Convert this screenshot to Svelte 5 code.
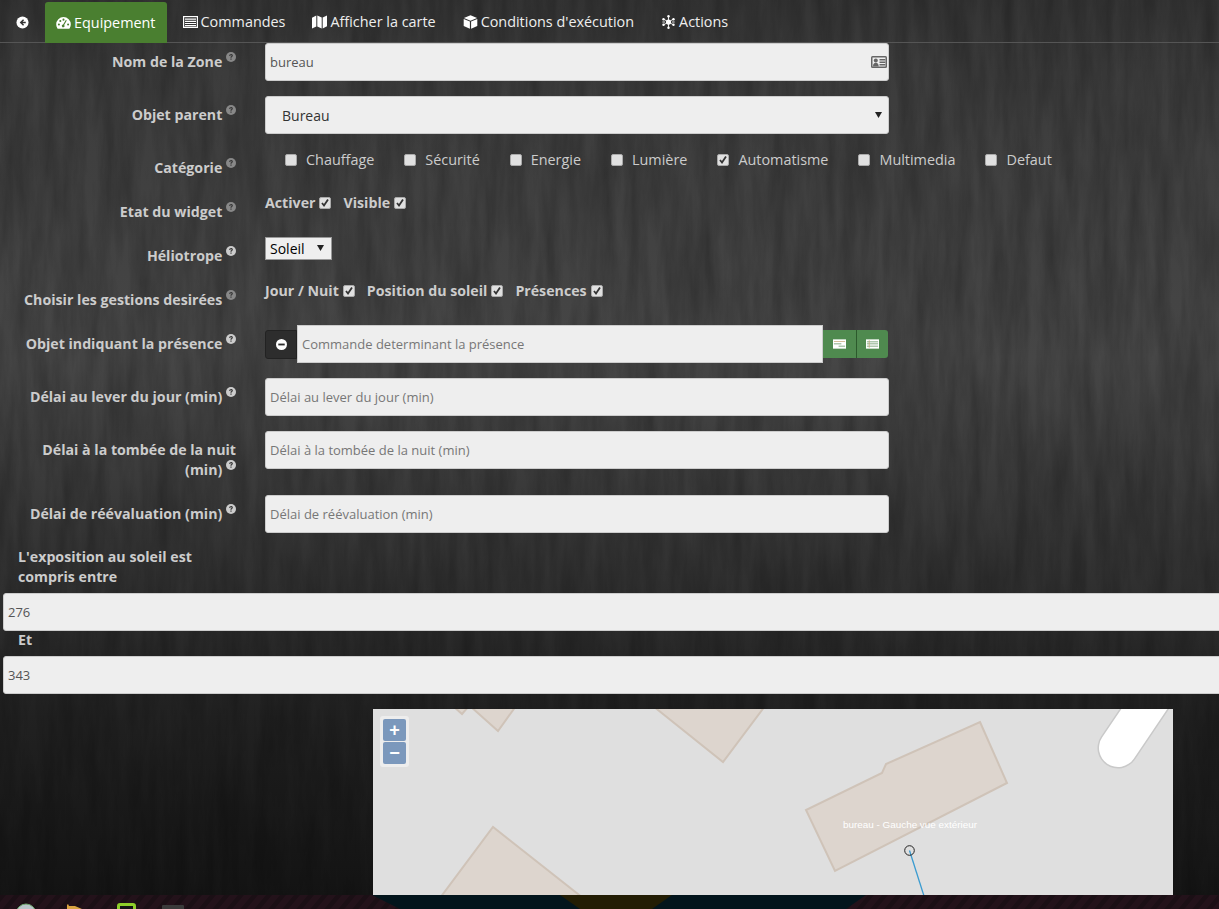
<script>
  const categories = [
    { name: "Chauffage", checked: false },
    { name: "Sécurité", checked: false },
    { name: "Energie", checked: false },
    { name: "Lumière", checked: false },
    { name: "Automatisme", checked: true },
    { name: "Multimedia", checked: false },
    { name: "Defaut", checked: false },
  ];
  const widgetState = ["Activer", "Visible"];
  const managements = ["Jour / Nuit", "Position du soleil", "Présences"];
</script>

{#snippet help(bright = false)}
  <svg class="help" class:bright viewBox="0 0 10 10" aria-hidden="true">
    <circle cx="5" cy="5" r="5" fill="currentColor" />
    <path d="M3.2 3.9c0-1.2.8-1.9 1.9-1.9s1.8.7 1.8 1.6c0 1.2-1.3 1.3-1.3 2.2H4.4c0-1.4 1.2-1.5 1.2-2.2 0-.3-.2-.5-.6-.5s-.6.3-.6.8zM4.4 6.5h1.2v1.3H4.4z" fill="#3a3a3a" />
  </svg>
{/snippet}

<div class="page">
  <svg class="wood" width="1219" height="895" aria-hidden="true">
    <defs>
      <filter id="grain" x="0" y="0" width="100%" height="100%">
        <feTurbulence type="fractalNoise" baseFrequency="0.07 0.009" numOctaves="5" seed="11" />
        <feColorMatrix values="0 0 0 0 0  0 0 0 0 0  0 0 0 0 0  1.3 0 0 0 -0.35" />
      </filter>
      <linearGradient id="shade" x1="0" y1="0" x2="0" y2="1">
        <stop offset="0" stop-color="#343434" />
        <stop offset="0.08" stop-color="#3c3c3c" />
        <stop offset="0.4" stop-color="#464646" />
        <stop offset="0.6" stop-color="#353535" />
        <stop offset="0.8" stop-color="#212121" />
        <stop offset="1" stop-color="#151515" />
      </linearGradient>
    </defs>
    <rect width="1219" height="895" fill="url(#shade)" />
    <rect width="1219" height="895" filter="url(#grain)" opacity="0.28" />
  </svg>

  <nav>
    <a class="tab" href="#back">
      <svg class="ico back" viewBox="0 0 14 14"><circle cx="7" cy="7" r="6.500" fill="#fff" /><path d="M7.600 3.400 4 7l3.600 3.600 1.100-1.100-1.600-1.600h3.400V6.100H7.100l1.600-1.600z" fill="#333" /></svg>
    </a>
    <a class="tab active" href="#equipement">
      <svg class="ico" viewBox="0 0 16 14"><path d="M8 .6a7.800 7.800 0 0 0-7.800 7.800c0 1.600.4 3 1.200 4.300.1.200.3.300.5.300h12.200c.2 0 .4-.1.500-.3.8-1.300 1.200-2.700 1.200-4.300A7.800 7.800 0 0 0 8 .6z" fill="#fff" /><circle cx="3.100" cy="8.600" r="1.100" fill="#4a7f30" /><circle cx="4.600" cy="4.800" r="1.100" fill="#4a7f30" /><circle cx="8" cy="3.400" r="1.100" fill="#4a7f30" /><circle cx="12.900" cy="8.600" r="1.100" fill="#4a7f30" /><path d="M11.500 4.300 8.700 9a1.500 1.500 0 1 1-1.100-.4l2.900-4.800z" fill="#4a7f30" /></svg>
      Equipement
    </a>
    <a class="tab" href="#commandes">
      <svg class="ico" viewBox="0 0 15 13"><rect x=".6" y="1.100" width="13.800" height="10.800" fill="none" stroke="#fff" stroke-width="1.200" /><path d="M2 3h11v1.200H2zM2 5.200h11v1.200H2zM2 7.400h11v1.200H2zM2 9.500h11v1.200H2z" fill="#fff" /></svg>
      Commandes
    </a>
    <a class="tab" href="#carte">
      <svg class="ico" viewBox="0 0 15 14"><path d="M0 2.800 4.300 .6v10.800L0 13.600zM5.300 .6l4.400 2v10.800l-4.400-2zM10.700 2.600 15 .4v10.800l-4.300 2.200z" fill="#fff" /></svg>
      Afficher la carte
    </a>
    <a class="tab" href="#conditions">
      <svg class="ico" viewBox="0 0 14 14"><path d="M7 .3 13.600 3 7 5.700.4 3z" fill="#fff" /><path d="M.2 4 6.400 6.600v7.200L.2 11.100zM7.600 6.600 13.800 4v7.100l-6.200 2.700z" fill="#fff" /></svg>
      Conditions d'exécution
    </a>
    <a class="tab" href="#actions">
      <svg class="ico" viewBox="0 0 16 16">
        <g stroke="#fff" stroke-width="1"><path d="M8 1v14M2 4.500l12 7M14 4.500l-12 7M1 8h3M12 8h3" /></g>
        <circle cx="8" cy="8" r="3" fill="#fff" />
        <g fill="#fff"><circle cx="8" cy="1.500" r="1.400" /><circle cx="8" cy="14.500" r="1.400" /><circle cx="2.300" cy="4.800" r="1.400" /><circle cx="13.700" cy="4.800" r="1.400" /><circle cx="2.300" cy="11.200" r="1.400" /><circle cx="13.700" cy="11.200" r="1.400" /></g>
      </svg>
      Actions
    </a>
  </nav>

  <form>
    <div class="row">
      <label for="zone">Nom de la Zone {@render help()}</label>
      <div class="with-icon">
        <input id="zone" type="text" value="bureau" />
        <svg class="vcard" viewBox="0 0 16 12"><rect width="16" height="12" rx="1.500" fill="#666" /><rect x="1.500" y="1.500" width="13" height="9" fill="#eee" /><circle cx="4.800" cy="4.600" r="2" fill="#666" /><path d="M2 10.500c0-2.600 1-3.700 2.800-3.700s2.900 1.100 2.900 3.700zM8.500 3h5.800v1.500H8.500zM8.500 5.500h5.800V7H8.500zM8.500 8h5.800v1.500H8.500z" fill="#666" /></svg>
      </div>
    </div>

    <div class="row">
      <label for="parent">Objet parent {@render help()}</label>
      <select id="parent" class="big-select"><option>Bureau</option></select>
    </div>

    <div class="row short">
      <span class="label">Catégorie {@render help()}</span>
      <div class="categories">
        {#each categories as c}
          <label class="cat"><input type="checkbox" checked={c.checked} />{c.name}</label>
        {/each}
      </div>
    </div>

    <div class="row short">
      <span class="label">Etat du widget {@render help()}</span>
      <div class="checks">
        {#each widgetState as item}
          <label class="check">{item}<input type="checkbox" checked /></label>
        {/each}
      </div>
    </div>

    <div class="row short">
      <label for="helio">Héliotrope {@render help(true)}</label>
      <div><select id="helio" class="small-select"><option>Soleil</option></select></div>
    </div>

    <div class="row short">
      <span class="label">Choisir les gestions desirées {@render help()}</span>
      <div class="checks">
        {#each managements as item}
          <label class="check">{item}<input type="checkbox" checked /></label>
        {/each}
      </div>
    </div>

    <div class="row">
      <label for="presence">Objet indiquant la présence {@render help(true)}</label>
      <div class="group">
        <button type="button" class="minus" aria-label="Retirer">
          <svg viewBox="0 0 12 12" width="11" height="11"><circle cx="6" cy="6" r="6" fill="#fff" /><rect x="2.500" y="5" width="7" height="2" fill="#2d2d2d" /></svg>
        </button>
        <input id="presence" type="text" placeholder="Commande determinant la présence" />
        <div class="green">
          <button type="button" aria-label="Liste">
            <svg viewBox="0 0 14 10" width="13" height="10"><rect width="14" height="10" fill="#fff" /><path d="M1 2h12v.8H1z" fill="#c9a67a" /><path d="M1 4.500h8v.8H1zM6 7h7v.8H6z" fill="#5d8f5d" /></svg>
          </button>
          <button type="button" aria-label="Tableau">
            <svg viewBox="0 0 14 10" width="13" height="10"><rect width="14" height="10" fill="#fff" /><path d="M1 2.200h12v.8H1zM1 4.500h12v.8H1zM1 6.800h12v.8H1z" fill="#5d8f5d" /><path d="M3 1h.8v8H3z" fill="#c9a67a" /></svg>
          </button>
        </div>
      </div>
    </div>

    <div class="row">
      <label for="lever">Délai au lever du jour (min) {@render help(true)}</label>
      <input id="lever" type="text" placeholder="Délai au lever du jour (min)" />
    </div>

    <div class="row">
      <label for="tombee" class="tall">Délai à la tombée de la nuit (min) {@render help(true)}</label>
      <input id="tombee" type="text" placeholder="Délai à la tombée de la nuit (min)" />
    </div>

    <div class="row">
      <label for="reeval">Délai de réévaluation (min) {@render help(true)}</label>
      <input id="reeval" type="text" placeholder="Délai de réévaluation (min)" />
    </div>

    <div class="wide">
      <label for="from" class="expo">L'exposition au soleil est compris entre</label>
      <input id="from" type="text" value="276" />
      <label for="to" class="et">Et</label>
      <input id="to" type="text" value="343" />
    </div>
  </form>

  <div class="map">
    <svg viewBox="373 709 800 186" width="800" height="186" aria-hidden="true">
      <rect x="373" y="709" width="800" height="186" fill="#dfdfdf" />
      <g class="soft">
        <g fill="#ddd5ce" stroke="#cfc3b8" stroke-width="2">
          <path d="M453 706 462 714 469 706z" />
          <path d="M470 706 498 731 516 706z" />
          <path d="M653 706 723 762 765 706z" />
          <path d="M440 898 493 827 583 898z" />
          <path d="M980 722 1007 783 835 871 806 810 882 773 886 764z" />
        </g>
        <path d="M1118 748 1170 671" stroke="#c9c9c9" stroke-width="41" stroke-linecap="round" />
        <path d="M1118 748 1170 671" stroke="#fff" stroke-width="38" stroke-linecap="round" />
      </g>
      <text x="910" y="828" text-anchor="middle">bureau - Gauche vue extérieur</text>
      <path d="M909.500 850.500 924 896" stroke="#3a9bd0" stroke-width="1.300" />
      <circle cx="909.500" cy="850.500" r="4.800" fill="none" stroke="#222" />
    </svg>
    <div class="zoom">
      <button type="button">+</button>
      <button type="button">−</button>
    </div>
  </div>

  <footer>
    <svg viewBox="0 0 1219 14" width="1219" height="14" aria-hidden="true">
      <defs>
        <pattern id="stripes" width="14" height="14" patternUnits="userSpaceOnUse" patternTransform="skewX(-40)">
          <rect width="14" height="14" fill="#23121a" />
          <rect width="6" height="14" fill="#1b0f15" />
        </pattern>
      </defs>
      <rect width="1219" height="14" fill="#03151c" />
      <path d="M0 0H372L400 14H0z" fill="url(#stripes)" />
      <path d="M866 0H1219V14H846z" fill="url(#stripes)" />
      <path d="M560 0H672L652 14H580z" fill="#231d04" />
      <circle cx="26" cy="19" r="10" fill="#b8c4c8" stroke="#6fa86f" />
      <path d="M67 14v-4l1-1 1 2 6 0 7 3z" fill="#d9a441" />
      <path d="M118.500 16V11a1.500 1.500 0 0 1 1.500-1.500h13a1.500 1.500 0 0 1 1.500 1.500v5z" fill="#141414" stroke="#8fce2a" stroke-width="3" />
      <path d="M162 14V11a1 1 0 0 1 1-1h20a1 1 0 0 1 1 1v3z" fill="#3a3a3a" />
    </svg>
  </footer>
</div>

<style>
  :global(body) {
    background: #131313;
    overflow: hidden;
  }

  .page {
    position: relative;
    width: 1219px;
    height: 909px;
    overflow: hidden;
    font-family: "Open Sans", sans-serif;
    font-size: 14.2px;
    line-height: 20px;
    color: #ccc;
  }

  .wood {
    position: absolute;
    left: 0;
    top: 0;
  }

  nav {
    position: relative;
    display: flex;
    gap: 5px;
    height: 40px;
    padding: 2px 0 0 5px;
    border-bottom: 1px solid #555;
  }

  .tab {
    display: flex;
    align-items: center;
    gap: 3px;
    padding: 0 11px;
    color: #eee;
    font-size: 14.4px;
    text-decoration: none;
    border-radius: 3px 3px 0 0;
  }

  .tab.active {
    background: #4a7f30;
    color: #fff;
    margin-bottom: -1px;
  }

  .ico {
    width: 15px;
    height: 14px;
    flex: none;
  }

  .ico.back {
    width: 13px;
    height: 13px;
  }

  form {
    position: relative;
  }

  .row {
    display: grid;
    grid-template-columns: 236px 624px;
    column-gap: 29px;
    margin-bottom: 15px;
  }

  .row.short {
    min-height: 29px;
  }

  .row > label,
  .label {
    padding: 9px 0 0 15px;
    text-align: right;
    font-weight: 700;
    color: #ccc;
  }

  .help {
    width: 10px;
    height: 10px;
    vertical-align: 5px;
    color: #888;
  }

  .help.bright {
    color: #ccc;
  }

  input[type="text"] {
    box-sizing: border-box;
    width: 100%;
    height: 38px;
    padding: 0 4px;
    background: #eee;
    border: 1px solid #ccc;
    border-radius: 3px;
    font-family: inherit;
    font-size: 13px;
    color: #555;
    outline: none;
  }

  input[type="text"]::placeholder {
    color: #777;
    opacity: 1;
  }

  .with-icon {
    position: relative;
  }

  .vcard {
    position: absolute;
    right: 2px;
    top: 13px;
    width: 16px;
    height: 12px;
  }

  select {
    appearance: none;
    font-family: inherit;
    outline: none;
    background-repeat: no-repeat;
    background-image: url("data:image/svg+xml,%3Csvg xmlns='http://www.w3.org/2000/svg' width='7' height='6'%3E%3Cpath d='M0 0h7L3.500 6z' fill='%23222'/%3E%3C/svg%3E");
  }

  .big-select {
    box-sizing: border-box;
    width: 100%;
    height: 38px;
    padding: 0 16px;
    background-color: #eee;
    background-position: right 6px center;
    border: 1px solid #ccc;
    border-radius: 3px;
    font-size: 14px;
    color: #333;
  }

  .small-select {
    display: block;
    box-sizing: border-box;
    width: 67px;
    height: 23px;
    padding: 0 4px;
    background-color: #efefef;
    background-position: right 7px top 7px;
    border: 1px solid #999;
    border-radius: 0;
    font-size: 14px;
    color: #000;
  }

  input[type="checkbox"] {
    appearance: none;
    box-sizing: border-box;
    width: 12px;
    height: 12px;
    margin: 0;
    flex: none;
    background-color: #e0e0e0;
    border: 1px solid #aaa;
    border-radius: 2px;
  }

  input[type="checkbox"]:checked {
    background-image: url("data:image/svg+xml,%3Csvg xmlns='http://www.w3.org/2000/svg' width='10' height='10'%3E%3Cpath d='M2 5l2 2.500L8 1.500' fill='none' stroke='%23333' stroke-width='1.800'/%3E%3C/svg%3E");
    background-position: center;
    background-repeat: no-repeat;
  }

  .categories {
    display: flex;
    padding: 1px 0 0 20px;
    white-space: nowrap;
  }

  .cat {
    display: flex;
    align-items: center;
    gap: 9px;
    margin-right: 30px;
    font-size: 14.4px;
    color: #ccc;
    height: 20px;
  }

  .checks {
    display: flex;
    gap: 12px;
    padding-top: 1px;
    white-space: nowrap;
  }

  .check {
    display: flex;
    align-items: center;
    gap: 4px;
    height: 18px;
    font-weight: 700;
    color: #ccc;
  }

  .group {
    display: flex;
    align-items: center;
  }

  .group input {
    width: 526px;
    border-radius: 0;
    flex: none;
  }

  .minus {
    display: flex;
    align-items: center;
    justify-content: center;
    width: 32px;
    height: 29px;
    padding: 0;
    background: #2d2d2d;
    border: 1px solid #222;
    border-radius: 3px 0 0 3px;
  }

  .green {
    display: flex;
    height: 28px;
    background: #4f8a4f;
    border-radius: 0 3px 3px 0;
  }

  .green button {
    display: flex;
    align-items: center;
    justify-content: center;
    width: 32.5px;
    padding: 0;
    background: none;
    border: none;
  }

  .green button + button {
    border-left: 1px solid #2c5a2c;
  }

  .wide {
    padding: 0 0 0 3px;
    margin-top: -1px;
  }

  .wide input {
    width: 1300px;
  }

  .wide label {
    display: block;
    font-weight: 700;
    color: #ccc;
    padding-left: 15px;
  }

  .expo {
    width: 205px;
    padding-bottom: 6px;
  }

  .et {
    margin: -1px 0 6px;
  }

  .map {
    position: relative;
    width: 800px;
    height: 186px;
    margin: 15px 0 0 373px;
  }

  .map svg {
    display: block;
  }

  .soft {
    filter: blur(0.6px);
  }

  .map text {
    font-family: "Liberation Sans", Arial, sans-serif;
    font-size: 9.9px;
    fill: #fff;
  }

  .zoom {
    position: absolute;
    left: 7px;
    top: 7px;
    display: flex;
    flex-direction: column;
    gap: 1px;
    padding: 3px;
    background: rgba(255, 255, 255, 0.45);
    border-radius: 3px;
  }

  .zoom button {
    width: 23px;
    height: 22px;
    padding: 0;
    background: #7b98bc;
    border: none;
    border-radius: 2px;
    color: #fff;
    font-family: "Liberation Sans", Arial, sans-serif;
    font-size: 18px;
    font-weight: 700;
    line-height: 20px;
  }

  footer {
    position: relative;
    height: 14px;
  }

  footer svg {
    display: block;
  }
</style>
